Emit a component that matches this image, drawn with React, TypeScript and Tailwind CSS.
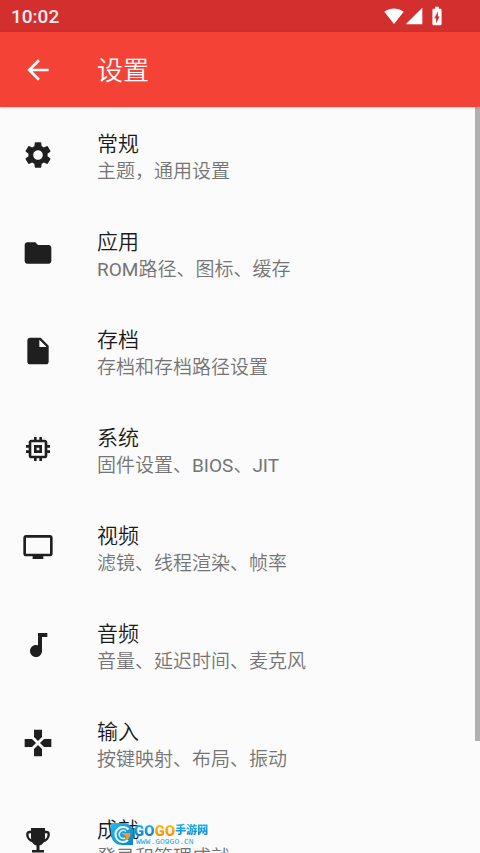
import type { ReactNode } from "react"
import {
    MdArrowBack,
    MdAudiotrack,
    MdBatteryChargingFull,
    MdFolder,
    MdGamepad,
    MdInsertDriveFile,
    MdMemory,
    MdSettings,
    MdSignalCellular4Bar,
    MdSignalWifi4Bar,
    MdTv,
} from "react-icons/md"

const TrophyIcon = () => (
    <svg viewBox="0 0 32 32" className="size-8" fill="none" aria-hidden="true">
        <path d="M9 3h14v10c0 4-3 7-5.500 7.500V25h4.500v2.500H10V25h4.500v-4.500C12 20 9 17 9 13z" fill="currentColor" />
        <path
            d="M10 7H7.500C6 7 5.300 8 5.300 9.500 5.300 13 8 15.500 11 16M22 7h2.500c1.500 0 2.200 1 2.200 2.500 0 3.500-2.700 6-5.700 6.500"
            stroke="currentColor"
            strokeWidth="2.400"
        />
    </svg>
)

const Latin = ({ children }: { children: ReactNode }) => <span className="font-normal">{children}</span>

type SettingsItem = {
    title: string
    description: ReactNode
    icon: ReactNode
}

const SETTINGS: SettingsItem[] = [
    { title: "常规", description: "主题，通用设置", icon: <MdSettings className="size-8" /> },
    {
        title: "应用",
        description: <><Latin>ROM</Latin>路径、图标、缓存</>,
        icon: <MdFolder className="size-8" />,
    },
    { title: "存档", description: "存档和存档路径设置", icon: <MdInsertDriveFile className="size-8" /> },
    {
        title: "系统",
        description: <>固件设置、<Latin>BIOS</Latin>、<Latin>JIT</Latin></>,
        icon: <MdMemory className="size-8" />,
    },
    { title: "视频", description: "滤镜、线程渲染、帧率", icon: <MdTv className="size-8" /> },
    { title: "音频", description: "音量、延迟时间、麦克风", icon: <MdAudiotrack className="size-8" /> },
    { title: "输入", description: "按键映射、布局、振动", icon: <MdGamepad className="size-8" /> },
    { title: "成就", description: "登录和管理成就", icon: <TrophyIcon /> },
]

const StatusBar = () => (
    <div className="flex h-8 shrink-0 items-center justify-between bg-[#d32f2f] pl-[11px] pr-8 text-[#fdeeee]">
        <span className="pt-0.5 text-[19px] font-medium">10:02</span>
        <div className="flex items-center text-white">
            <MdSignalWifi4Bar className="size-5" />
            <MdSignalCellular4Bar className="size-5" />
            <MdBatteryChargingFull className="ml-0.5 size-[22px]" />
        </div>
    </div>
)

const AppBar = () => (
    <header className="z-10 flex h-[75px] shrink-0 items-center bg-[#f44336] text-white shadow-sm">
        <button type="button" aria-label="返回" className="flex w-[97px] cursor-pointer pl-[22px]">
            <MdArrowBack className="size-8" />
        </button>
        <h1 className="pt-1 text-[26px] font-[350]">设置</h1>
    </header>
)

const SettingsRow = ({ title, description, icon }: SettingsItem) => (
    <li>
        <button type="button" className="flex h-[98px] w-full cursor-pointer items-center text-left">
            <span className="w-[97px] shrink-0 pb-0.5 pl-[22px] text-[#1f1f1f]">{icon}</span>
            <span className="flex flex-col pt-1">
                <span className="text-[21px] leading-7 font-[350] text-[#1a1a1a]">{title}</span>
                <span className="text-[19px] leading-7 font-[350] text-[#747474]">{description}</span>
            </span>
        </button>
    </li>
)

const Watermark = () => (
    <div className="absolute bottom-2 left-[111px] flex items-center gap-px">
        <svg viewBox="0 0 22 22" className="size-[22px] shrink-0" fill="none" aria-hidden="true">
            <defs>
                <linearGradient id="logo-blue" x1="0" y1="0" x2="1" y2="1">
                    <stop offset="0" stopColor="#22b9ef" />
                    <stop offset="1" stopColor="#0c86cc" />
                </linearGradient>
            </defs>
            <path d="M0 0h12c6 0 10 4 10 10v12H11C4 22 0 17 0 11z" fill="url(#logo-blue)" />
            <path d="M17.500 6.500A7.500 7.500 0 1 0 17 17" stroke="#fff" strokeWidth="2" />
            <path d="M15 8.500A4 4 0 1 0 14 15" stroke="#d8f2fd" strokeWidth="1.500" />
            <path d="M10 10h9.500c0 4-2 6.500-5.500 7.500l1-4z" fill="#f89a1c" />
        </svg>
        <div className="flex flex-col">
            <div className="flex items-center leading-4 font-black">
                <span className="bg-linear-to-b from-[#22b9ef] to-[#0b72c4] bg-clip-text text-[15px] text-transparent">GO</span>
                <span className="bg-linear-to-b from-[#ffc20e] to-[#f57f00] bg-clip-text text-[15px] text-transparent">GO</span>
                <span className="bg-linear-to-b from-[#22b9ef] to-[#0b72c4] bg-clip-text text-[11px] text-transparent">
                    手游网
                </span>
            </div>
            <span className="pl-0.5 font-['Liberation_Mono',monospace] text-[8px] leading-[6px] text-[#22a6e0]">
                WWW.GO9GO.CN
            </span>
        </div>
    </div>
)

const App = () => {
    return (
        <div className="relative flex h-screen flex-col overflow-hidden bg-[#fbfbfb] font-[Roboto,'Noto_Sans_CJK_SC',sans-serif]">
            <StatusBar />
            <AppBar />
            <main className="flex min-h-0 flex-1 overflow-hidden">
                <ul className="flex-1">
                    {SETTINGS.map((item) => (
                        <SettingsRow key={item.title} {...item} />
                    ))}
                </ul>
                <div className="h-[85%] w-[5px] bg-[#b0b0b0]" />
            </main>
            <Watermark />
        </div>
    )
}

export default App
